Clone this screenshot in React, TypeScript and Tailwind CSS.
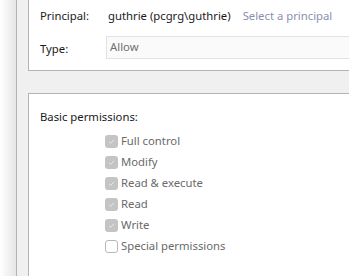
const font = "font-['Segoe_UI','Noto_Sans','Open_Sans',sans-serif]";

const perms: Array<[string, boolean]> = [
  ["Full control", true],
  ["Modify", true],
  ["Read & execute", true],
  ["Read", true],
  ["Write", true],
  ["Special permissions", false],
];

function Box({ checked }: { checked: boolean }) {
  if (!checked) {
    return (
      <span className="h-[13px] w-[13px] flex-none rounded-[3px] border border-[#b8b8b8] bg-white" />
    );
  }
  return (
    <span className="grid h-[13px] w-[13px] flex-none place-items-center rounded-[3px] bg-[#c4c4c4]">
      <svg width="9" height="9" viewBox="0 0 9 9" fill="none">
        <path d="M2 4.8 3.7 6.4 7 2.8" stroke="#e8e8e8" strokeWidth="1" />
      </svg>
    </span>
  );
}

export default function App() {
  return (
    <div className={`flex h-[276px] w-[349px] overflow-hidden bg-[#f0f0f0] text-[11.3px] ${font}`}>
      {/* window edge */}
      <div className="w-[17px] flex-none border-r border-[#b4b4b4] bg-gradient-to-r from-white to-[#e6e6e6]" />

      <div className="flex flex-1 flex-col gap-[22px] pl-[11px]">
        {/* principal / type */}
        <div className="h-[71px] w-[400px] flex-none border-b border-l border-[#b4b4b4] bg-white">
          <div className="flex h-[33px] items-center pl-[11px] text-[#1a1a1a]">
            <span className="w-[67px]">Principal:</span>
            <span className="ml-[1px]">guthrie (pcgrg\guthrie)</span>
            <span className="ml-[12px] text-[#8a8fb0]">Select a principal</span>
          </div>
          <div className="flex items-center pl-[11px] pt-[3px]">
            <span className="w-[66px] pt-[3px] text-[#1a1a1a]">Type:</span>
            <div className="flex h-[23px] flex-1 items-center border border-[#e2e2e2] bg-[#fafafa] pl-[3px] text-[#707070]">
              Allow
            </div>
          </div>
        </div>

        {/* basic permissions */}
        <div className="w-[400px] flex-1 border-l border-t border-[#b4b4b4] bg-white pl-[11px] pt-[15px]">
          <div className="text-[#1a1a1a]">Basic permissions:</div>
          <ul className="mt-[5px] flex flex-col pl-[65px]">
            {perms.map(([label, checked]) => (
              <li key={label} className="flex h-[21px] items-center gap-[3px] text-[#6a6a6a]">
                <Box checked={checked} />
                <span>{label}</span>
              </li>
            ))}
          </ul>
        </div>
      </div>
    </div>
  );
}
